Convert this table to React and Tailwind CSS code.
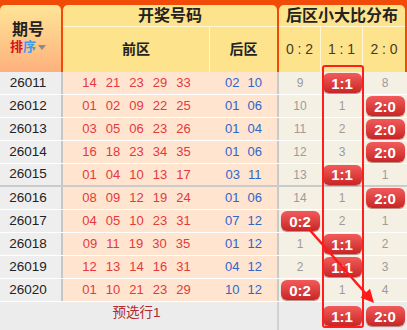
import React from 'react';

const rows = [
    { id: '26011', front: ['14', '21', '23', '29', '33'], back: ['02', '10'], dist: ['9', '1:1', '8'] },
    { id: '26012', front: ['01', '02', '09', '22', '25'], back: ['01', '06'], dist: ['10', '1', '2:0'] },
    { id: '26013', front: ['03', '05', '06', '23', '26'], back: ['01', '04'], dist: ['11', '2', '2:0'] },
    { id: '26014', front: ['16', '18', '23', '34', '35'], back: ['01', '06'], dist: ['12', '3', '2:0'] },
    { id: '26015', front: ['01', '04', '10', '13', '17'], back: ['03', '11'], dist: ['13', '1:1', '1'] },
    { id: '26016', front: ['08', '09', '12', '19', '24'], back: ['01', '06'], dist: ['14', '1', '2:0'] },
    { id: '26017', front: ['04', '05', '10', '23', '31'], back: ['07', '12'], dist: ['0:2', '2', '1'] },
    { id: '26018', front: ['09', '11', '19', '30', '35'], back: ['01', '12'], dist: ['1', '1:1', '2'] },
    { id: '26019', front: ['12', '13', '14', '16', '31'], back: ['04', '12'], dist: ['2', '1:1', '3'] },
    { id: '26020', front: ['01', '10', '21', '23', '29'], back: ['10', '12'], dist: ['0:2', '1', '4'] },
];

function Badge({ text }) {
    return (
        <div className="w-[39px] h-[20px] rounded-[6px] bg-linear-to-b from-[#f25a5a] to-[#c82424] shadow-[0_1px_1px_rgba(110,0,0,0.45)] flex items-center justify-center text-white font-bold text-[15px] leading-none">
            {text}
        </div>
    );
}

function DistValue({ value }) {
    if (value.includes(':')) return <Badge text={value} />;
    return <span className="text-[12px] text-[#9b9b9b]">{value}</span>;
}

function App() {
    return (
        <div className="relative w-[407px] h-[330px] overflow-hidden bg-white font-['Liberation_Sans','Noto_Sans_CJK_SC',sans-serif]">
            {/* Header */}
            <div className="flex h-[72px] bg-[#f24b08] pt-[5px] pr-[2px] gap-[2px]">
                <div className="w-[61px] rounded-t-[5px] bg-linear-to-b from-[#fee597] to-[#fdb07c] flex flex-col items-center pt-[15px] pr-[5px]">
                    <div className="text-[16px] font-bold leading-[20px] text-[#222]">期号</div>
                    <div className="flex items-center text-[13px] font-bold leading-[17px] -mt-[2px]">
                        <span className="text-[#d3121c]">排</span>
                        <span className="text-[#3c9bef]">序</span>
                        <span className="ml-[2px] mt-[1px] w-0 h-0 border-x-[4px] border-x-transparent border-t-[5px] border-t-[#8a8a8a]"></span>
                    </div>
                </div>

                <div className="w-[214px] rounded-t-[5px] overflow-hidden flex flex-col bg-[#fde38c]">
                    <div className="h-[22px] border-b border-[#fff6d8] flex items-center justify-center text-[16px] font-bold text-[#222]">
                        开奖号码
                    </div>
                    <div className="flex h-[45px] text-[14px] font-bold text-[#222]">
                        <div className="w-[147px] border-r border-[#fff6d8] flex items-center justify-center">前区</div>
                        <div className="flex-1 flex items-center justify-center">后区</div>
                    </div>
                </div>

                <div className="w-[126px] rounded-t-[5px] overflow-hidden flex flex-col bg-[#fde38c]">
                    <div className="h-[22px] border-b border-[#fff6d8] flex items-center justify-center text-[16px] font-bold text-[#222]">
                        后区小大比分布
                    </div>
                    <div className="flex h-[45px] text-[14px] text-[#4a3a22]">
                        <div className="w-[42px] border-r border-[#fff6d8] flex items-center justify-center whitespace-pre">0 : 2</div>
                        <div className="w-[42px] border-r border-[#fff6d8] flex items-center justify-center whitespace-pre">1 : 1</div>
                        <div className="w-[42px] flex items-center justify-center whitespace-pre">2 : 0</div>
                    </div>
                </div>
            </div>

            {/* Body */}
            {rows.map((row, i) => (
                <div
                    key={row.id}
                    className={i === 4 ? 'flex h-[23px] border-b-2 border-[#cbcbcb]' : 'flex h-[23px] border-b border-white'}
                >
                    <div className="w-[63px] pr-[5px] bg-[#eeeeee] border-r-2 border-[#c6c6c6] flex items-center justify-center text-[13.5px] text-[#222]">
                        {row.id}
                    </div>
                    <div className="w-[147px] bg-[#ffe4d0] flex items-center justify-center gap-[9px] text-[13px] text-[#e5393b]">
                        {row.front.map((n, j) => <span key={j}>{n}</span>)}
                    </div>
                    <div className="w-[69px] bg-[#ffe4d0] border-r-2 border-[#c9c9c9] flex items-center justify-center gap-[8px] text-[13px] text-[#2f66cc]">
                        {row.back.map((n, j) => <span key={j}>{n}</span>)}
                    </div>
                    <div className="w-[42px] bg-[#f5f0e4] flex items-center justify-center">
                        <DistValue value={row.dist[0]} />
                    </div>
                    <div className="w-[42px] bg-[#f5f0e4] flex items-center justify-center">
                        <DistValue value={row.dist[1]} />
                    </div>
                    <div className="w-[44px] bg-[#f5f0e4] flex items-center justify-center">
                        <DistValue value={row.dist[2]} />
                    </div>
                </div>
            ))}

            {/* Footer */}
            <div className="flex h-[28px] bg-[#ececec]">
                <div className="w-[63px]"></div>
                <div className="w-[147px] pt-[2px] text-center text-[13.5px] leading-[18px] text-[#b02a2e]">预选行1</div>
                <div className="w-[69px] border-r-2 border-[#d2d2d2]"></div>
                <div className="w-[42px]"></div>
                <div className="w-[42px] flex justify-center pt-[4px]">
                    <Badge text="1:1" />
                </div>
                <div className="w-[44px] flex justify-center pt-[4px]">
                    <Badge text="2:0" />
                </div>
            </div>

            {/* Highlight box on 1:1 column */}
            <div className="absolute left-[322px] top-[65px] w-[42px] h-[263px] border-2 border-[#ff1e1e] rounded-[3px] pointer-events-none"></div>

            {/* Trend arrow */}
            <svg className="absolute left-0 top-0 pointer-events-none" width="407" height="330" viewBox="0 0 407 330">
                <line x1="308" y1="228" x2="367" y2="295" stroke="#ff1a1a" strokeWidth="2.5" />
                <polygon points="374,303 360.5,297.5 370,288.8" fill="#ff1a1a" />
            </svg>
        </div>
    );
}

export default App;
